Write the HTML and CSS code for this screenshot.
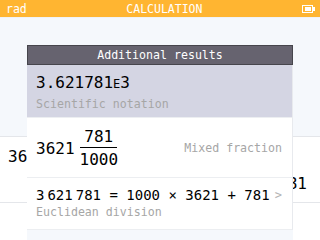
FILE: index.html
```html
<html>
<head>
    <title>Calculation</title>
    <meta http-equiv="content-type" content="text/html; charset=UTF-8">
    <link rel="stylesheet" href="styles.css">
</head>
<body>
    <div id="topbar">
        <span class="angle">rad</span>
        <span class="title">CALCULATION</span>
        <span class="battery"><span class="level"></span></span>
    </div>

    <div id="screen">
        <div class="empty"></div>
        <div class="history">
            <div class="input">3621781</div>
            <div class="output">3621781</div>
        </div>

        <div id="popup">
            <div class="header">Additional results</div>
            <div class="row selected">
                <div class="value">3.621781<span class="exp">E</span>3</div>
                <div class="label">Scientific notation</div>
            </div>
            <div class="row mixed">
                <div class="value">
                    <span>3621</span>
                    <span class="frac"><span class="num">781</span><span class="den">1000</span></span>
                </div>
                <div class="label">Mixed fraction</div>
            </div>
            <div class="row division">
                <div class="value">3<span class="thin"></span>621<span class="thin"></span>781 = 1000 × 3621 + 781</div>
                <div class="label">Euclidean division</div>
                <span class="chevron">&gt;</span>
            </div>
        </div>
    </div>
</body>
</html>
```

FILE: styles.css
```css
body {
    margin: 0;
    width: 320px;
    height: 240px;
    overflow: hidden;
    font-family: 'DejaVu Sans Mono', 'Liberation Mono', monospace;
    background: #ffffff;
}

#topbar {
    height: 18px;
    background: #ffb531;
    color: #ffffff;
    font-size: 11.5px;
    display: flex;
    align-items: center;
    justify-content: space-between;
    padding: 0 5px 0 6px;
    border-bottom: 1px solid #f0f2f6;
    box-sizing: border-box;
}

.battery {
    position: relative;
    width: 11px;
    height: 8px;
    border: 1px solid #ffffff;
    box-sizing: border-box;
    margin-right: 2px;
    padding: 1px 1px 1px 2px;
}

    .battery .level {
        display: block;
        height: 100%;
        background: #ffffff;
    }

    .battery::after {
        content: "";
        position: absolute;
        right: -3px;
        top: 1px;
        width: 2px;
        height: 4px;
        background: #ffffff;
    }

#screen {
    position: relative;
    height: 222px;
}

.empty {
    height: 118px;
    background: #f5f8fc;
    border-bottom: 1px solid #e4e6ea;
}

.history {
    height: 65px;
    border-bottom: 1px solid #e4e6ea;
    font-size: 16px;
    padding: 0 13px 0 8px;
}

    .history .input {
        padding-top: 10px;
    }

    .history .output {
        text-align: right;
        padding-top: 8px;
    }

#popup {
    position: absolute;
    left: 27px;
    top: 27px;
    width: 266px;
    height: 195px;
    background: #f5f8fc;
    box-sizing: border-box;
}

.header {
    height: 20px;
    background: #66636f;
    border: 1px solid #46454c;
    box-sizing: border-box;
    color: #ffffff;
    font-size: 11.6px;
    text-align: center;
    line-height: 18px;
}

.row {
    position: relative;
    background: #ffffff;
    border-right: 1px solid #e8eaee;
    border-bottom: 1px solid #eceef1;
    padding: 0 10px 0 9px;
    box-sizing: border-box;
}

    .row .value {
        font-size: 16px;
        color: #000000;
    }

    .row .label {
        font-size: 11.6px;
        color: #a6a6a6;
    }

.selected {
    height: 53px;
    background: #d4d5e3;
    padding-top: 8px;
}

    .selected .label {
        padding-top: 5px;
    }

.exp {
    font-size: 12px;
}

.mixed {
    height: 60px;
    display: flex;
    align-items: center;
    justify-content: space-between;
}

    .mixed .value {
        display: flex;
        align-items: center;
        padding-top: 1px;
    }

.frac {
    display: inline-flex;
    flex-direction: column;
    align-items: center;
    margin-left: 1px;
}

    .frac .num {
        padding: 0 4px 1px;
        border-bottom: 1px solid #000000;
    }

    .frac .den {
        padding: 2px 4px 0;
    }

.division {
    height: 52px;
    padding-top: 9px;
}

    .division .value {
        font-size: 14px;
    }

    .division .label {
        padding-top: 2px;
    }

.thin {
    display: inline-block;
    width: 3px;
}

.chevron {
    position: absolute;
    right: 10px;
    top: 10px;
    font-size: 12px;
    color: #b4b4b4;
}
```
